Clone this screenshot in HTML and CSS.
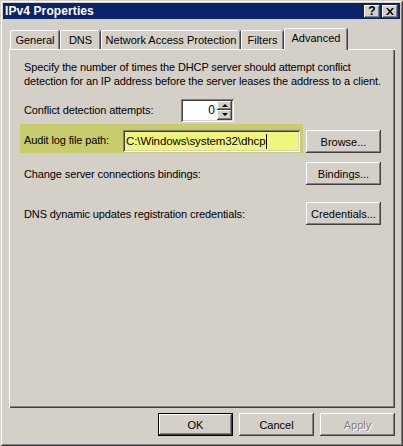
FILE: index.html
```html
<!DOCTYPE html>
<html>
<head>
<meta charset="utf-8">
<link rel="stylesheet" href="styles.css">
</head>
<body>
<div class="window">
  <div class="titlebar">
    <span class="title">IPv4 Properties</span>
    <div class="caption-btns">
      <span class="cbtn help">?</span>
      <span class="cbtn close"><svg width="8" height="7" viewBox="0 0 8 7"><path d="M0 0h2l2 2.5L6 0h2L5 3.5 8 7H6L4 4.5 2 7H0l3-3.5z" fill="#000"/></svg></span>
    </div>
  </div>
  <div class="body">
    <div class="tabs">
      <div class="tab tab-general">General</div>
      <div class="tab tab-dns">DNS</div>
      <div class="tab tab-nap">Network Access Protection</div>
      <div class="tab tab-filters">Filters</div>
      <div class="tab tab-advanced selected">Advanced</div>
    </div>
    <div class="panel">
      <p class="desc">Specify the number of times the DHCP server should attempt conflict<br>detection for an IP address before the server leases the address to a client.</p>
      <div class="row row-conflict">
        <span class="label label-conflict">Conflict detection attempts:</span>
        <div class="spinner">
          <span class="spin-value">0</span>
          <div class="spin-btns">
            <span class="spin-btn"><span class="arrow-up"></span></span>
            <span class="spin-btn"><span class="arrow-down"></span></span>
          </div>
        </div>
      </div>
      <div class="row row-audit">
        <div class="highlight">
          <span class="label label-audit">Audit log file path:</span>
          <div class="field"><span class="field-text">C:\Windows\system32\dhcp</span><span class="caret"></span></div>
        </div>
        <button class="btn">Browse...</button>
      </div>
      <div class="row row-bindings">
        <span class="label grow">Change server connections bindings:</span>
        <button class="btn">Bindings...</button>
      </div>
      <div class="row row-cred">
        <span class="label grow">DNS dynamic updates registration credentials:</span>
        <button class="btn">Credentials...</button>
      </div>
    </div>
    <div class="actions">
      <button class="btn default">OK</button>
      <button class="btn">Cancel</button>
      <button class="btn disabled">Apply</button>
    </div>
  </div>
</div>
</body>
</html>
```

FILE: styles.css
```css
* { box-sizing: border-box; }
html, body { margin: 0; padding: 0; }
body {
  width: 403px;
  height: 446px;
  background: #d4d0c8;
  font-family: "Liberation Sans", Arial, sans-serif;
  font-size: 11px;
  color: #000;
  overflow: hidden;
}
.window {
  width: 403px;
  height: 446px;
  padding: 3px;
  background: #d4d0c8;
  box-shadow: inset 1px 1px #d4d0c8, inset -1px -1px #404040, inset 2px 2px #fff, inset -2px -2px #808080;
}
.titlebar {
  height: 16px;
  background: #0a246a;
  display: flex;
  align-items: center;
  justify-content: space-between;
  padding: 0 2px 0 2px;
}
.title {
  color: #fff;
  font-weight: bold;
  font-size: 12px;
  letter-spacing: 0.1px;
}
.caption-btns {
  display: flex;
  gap: 2px;
}
.cbtn {
  width: 16px;
  height: 13px;
  background: #d4d0c8;
  box-shadow: inset -1px -1px #404040, inset 1px 1px #fff, inset -2px -2px #808080;
  display: flex;
  align-items: center;
  justify-content: center;
  font-weight: bold;
  font-size: 12px;
  line-height: 13px;
}
.body {
  padding: 9px 5px 0 6px;
}
.tabs {
  display: flex;
  align-items: flex-end;
  height: 21px;
  padding-left: 1px;
  position: relative;
  z-index: 1;
}
.tab {
  height: 19px;
  border-left: 1px solid #fff;
  border-top: 1px solid #fff;
  border-radius: 2px 2px 0 0;
  box-shadow: inset -1px 0 #808080, 1px 0 #404040;
  display: flex;
  align-items: center;
  justify-content: center;
  padding-bottom: 1px;
  margin-right: 1px;
  background: #d4d0c8;
}
.tab-general { width: 49px; }
.tab-dns { width: 40px; }
.tab-nap { width: 139px; }
.tab-filters { width: 42px; }
.tab.selected {
  width: 63px;
  height: 22px;
  margin-bottom: -1px;
  padding-bottom: 3px;
}
.panel {
  height: 359px;
  border-left: 1px solid #fff;
  border-top: 1px solid #fff;
  box-shadow: inset -1px -1px #404040, inset -2px -2px #808080;
  padding: 10px 14px 0 14px;
}
.desc {
  margin: 0;
  line-height: 14px;
  letter-spacing: -0.12px;
}
.row {
  display: flex;
  align-items: center;
}
.label { letter-spacing: -0.12px; }
.grow { flex: 1; }
.row-conflict { margin-top: 11px; height: 22px; }
.label-conflict { width: 157px; }
.spinner {
  width: 53px;
  height: 23px;
  background: #fff;
  box-shadow: inset 1px 1px #808080, inset -1px -1px #fff, inset 2px 2px #404040, inset -2px -2px #d4d0c8;
  display: flex;
  align-items: center;
  padding: 2px;
}
.spin-value {
  flex: 1;
  text-align: right;
  padding-right: 2px;
  font-size: 12px;
}
.spin-btns {
  display: flex;
  flex-direction: column;
  width: 15px;
  height: 19px;
}
.spin-btn {
  flex: 1;
  background: #d4d0c8;
  box-shadow: inset -1px -1px #404040, inset 1px 1px #fff, inset -2px -2px #808080;
  display: flex;
  align-items: center;
  justify-content: center;
}
.arrow-up {
  width: 0; height: 0;
  border-left: 3px solid transparent;
  border-right: 3px solid transparent;
  border-bottom: 3px solid #000;
}
.arrow-down {
  width: 0; height: 0;
  border-left: 3px solid transparent;
  border-right: 3px solid transparent;
  border-top: 3px solid #000;
}
.row-audit {
  margin-top: 3px;
  align-items: flex-end;
  margin-left: -4px;
}
.highlight {
  width: 283px;
  height: 29px;
  background: #c9cc6c;
  display: flex;
  align-items: flex-end;
  padding: 0 3px 1px 4px;
}
.label-audit {
  width: 99px;
  align-self: center;
  padding-top: 4px;
}
.field {
  width: 177px;
  height: 22px;
  background: #f2f57c;
  box-shadow: inset 1px 1px #808080, inset -1px -1px #fff, inset 2px 2px #404040, inset -2px -2px #d4d0c8;
  display: flex;
  align-items: center;
  padding: 0 3px;
  font-size: 11.5px;
}
.field-text { letter-spacing: -0.1px; }
.caret {
  width: 1px;
  height: 15px;
  background: #000;
}
.btn {
  font-family: inherit;
  font-size: 11px;
  width: 75px;
  height: 23px;
  border: none;
  padding: 0;
  background: #d4d0c8;
  color: #000;
  box-shadow: inset -1px -1px #404040, inset 1px 1px #fff, inset -2px -2px #808080;
}
.row-audit .btn { margin-left: 3px; }
.row-bindings { margin-top: 9px; }
.row-cred { margin-top: 17px; }
.actions {
  display: flex;
  justify-content: flex-end;
  gap: 6px;
  margin-top: 5px;
}
.btn.default {
  border: 1px solid #000;
  box-shadow: inset -1px -1px #404040, inset 1px 1px #fff, inset -2px -2px #808080;
}
.btn.disabled {
  color: #808080;
  text-shadow: 1px 1px #fff;
}
```
